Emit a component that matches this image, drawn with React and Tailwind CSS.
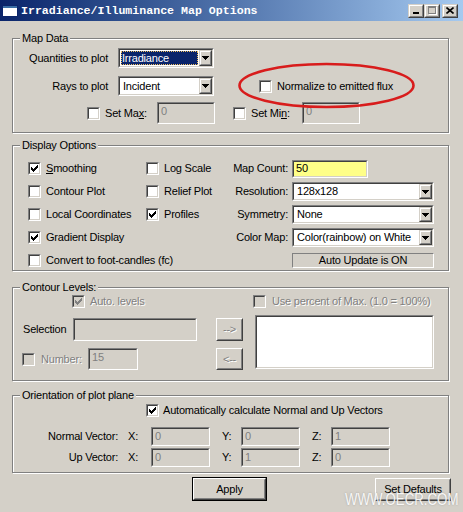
import React from "react";

// Classic 3D-style primitives
function Check({ checked = false, disabled = false }) {
  const inner = disabled
    ? "relative block w-full h-full border border-t-[#404040] border-l-[#404040] border-b-[#d4d0c8] border-r-[#d4d0c8] bg-[#d4d0c8]"
    : "relative block w-full h-full border border-t-[#404040] border-l-[#404040] border-b-[#d4d0c8] border-r-[#d4d0c8] bg-white";
  return (
    <span className="block w-[13px] h-[13px] shrink-0 border border-t-[#808080] border-l-[#808080] border-b-white border-r-white">
      <span className={inner}>
        {checked && (
          <svg className="absolute left-0 top-0" width="9" height="9" viewBox="0 0 9 9" shapeRendering="crispEdges">
            <path
              d="M7 1h1v1h-1z M6 2h2v1h-2z M1 3h1v1h-1z M5 3h3v1h-3z M1 4h2v1h-2z M4 4h3v1h-3z M1 5h5v1h-5z M2 6h3v1h-3z M3 7h1v1h-1z"
              fill={disabled ? "#808080" : "#000"}
            />
          </svg>
        )}
      </span>
    </span>
  );
}

function Sunken({ className = "", inner = "bg-white", children }) {
  return (
    <div className={"shrink-0 border border-t-[#808080] border-l-[#808080] border-b-white border-r-white " + className}>
      <div className={"h-full border border-t-[#404040] border-l-[#404040] border-b-[#d4d0c8] border-r-[#d4d0c8] " + inner}>
        {children}
      </div>
    </div>
  );
}

function Raised({ className = "", children }) {
  return (
    <div className={"shrink-0 border border-t-[#d4d0c8] border-l-[#d4d0c8] border-b-[#404040] border-r-[#404040] " + className}>
      <div className="h-full flex items-center justify-center border border-t-white border-l-white border-b-[#808080] border-r-[#808080] bg-[#d4d0c8]">
        {children}
      </div>
    </div>
  );
}

function DownArrow() {
  return (
    <svg width="7" height="4" viewBox="0 0 7 4" shapeRendering="crispEdges">
      <path d="M0 0h7v1h-7z M1 1h5v1h-5z M2 2h3v1h-3z M3 3h1v1h-1z" fill="#000" />
    </svg>
  );
}

function Combo({ className = "", value, focused = false }) {
  return (
    <Sunken className={className} inner="bg-white flex">
      <div className="flex-1 min-w-0 flex items-stretch">
        {focused ? (
          <div className="flex-1 m-[1px] flex items-center pl-[1px] bg-[#0a246a] text-white outline-1 outline-dotted outline-[#f0c060] -outline-offset-1">
            {value}
          </div>
        ) : (
          <div className="flex items-center pl-[3px]">{value}</div>
        )}
      </div>
      <Raised className="w-[13px]">
        <DownArrow />
      </Raised>
    </Sunken>
  );
}

function Btn({ className = "", children, isDefault = false, disabled = false }) {
  const label = disabled ? (
    <span className="text-[#808080] [text-shadow:1px_1px_0_#fff]">{children}</span>
  ) : (
    children
  );
  if (isDefault) {
    return (
      <div className={"shrink-0 border border-black " + className}>
        <div className="h-full flex items-center justify-center border border-t-white border-l-white border-b-[#404040] border-r-[#404040]">
          <div className="w-full h-full flex items-center justify-center border border-t-[#d4d0c8] border-l-[#d4d0c8] border-b-[#808080] border-r-[#808080]">
            {label}
          </div>
        </div>
      </div>
    );
  }
  return (
    <div className={"shrink-0 border border-t-white border-l-white border-b-[#404040] border-r-[#404040] " + className}>
      <div className="h-full flex items-center justify-center border border-t-[#d4d0c8] border-l-[#d4d0c8] border-b-[#808080] border-r-[#808080]">
        {label}
      </div>
    </div>
  );
}

function Dis({ className = "", children }) {
  return <span className={"text-[#808080] [text-shadow:1px_1px_0_#fff] " + className}>{children}</span>;
}

function Group({ title, className = "", children }) {
  return (
    <div className={"ml-[12px] w-[437px] flex flex-col border border-[#808080] shadow-[inset_1px_1px_0_#fff,1px_1px_0_#fff] " + className}>
      <div className="self-start -mt-[7px] -mb-[6px] ml-[7px] h-[13px] px-[2px] bg-[#d4d0c8] leading-[13px]">{title}</div>
      {children}
    </div>
  );
}

function CheckLabel({ checked, children, className = "" }) {
  return (
    <div className={"flex items-center gap-[5px] " + className}>
      <Check checked={checked} />
      <span>{children}</span>
    </div>
  );
}

function VecField({ value }) {
  return (
    <Sunken className="w-[59px] h-[19px]" inner="bg-[#d4d0c8] text-[#808080] pl-[2px] pt-[1px]">
      {value}
    </Sunken>
  );
}

function VecRow({ className = "", label, x, y, z }) {
  return (
    <div className={"h-[19px] flex items-center " + className}>
      <span className="w-[105px] text-right">{label}</span>
      <span className="ml-[10px] w-[23px]">X:</span>
      <VecField value={x} />
      <span className="ml-[12px] w-[19px]">Y:</span>
      <VecField value={y} />
      <span className="ml-[12px] w-[19px]">Z:</span>
      <VecField value={z} />
    </div>
  );
}

function TitleBar() {
  return (
    <div className="h-[21px] flex items-center bg-linear-to-r from-[#0a246a] to-[#a6caf0]">
      <svg className="ml-[2px] shrink-0" width="16" height="12" viewBox="0 0 16 12" shapeRendering="crispEdges">
        <rect x="0" y="0" width="16" height="12" fill="#0a246a" />
        <rect x="1" y="1" width="14" height="2" fill="#3a6ea5" />
        <rect x="1" y="3" width="14" height="8" fill="#ffffff" />
      </svg>
      <span className="ml-[3px] text-white font-bold text-[11.6px] tracking-normal font-['Liberation_Mono',monospace]">
        Irradiance/Illuminance Map Options
      </span>
      <div className="ml-auto mr-[5px] flex items-center">
        <Raised className="w-[16px] h-[14px]">
          <svg width="8" height="7" viewBox="0 0 8 7" shapeRendering="crispEdges">
            <rect x="1" y="5" width="6" height="2" fill="#000" />
          </svg>
        </Raised>
        <Raised className="w-[16px] h-[14px]">
          <svg width="10" height="9" viewBox="0 0 10 9" shapeRendering="crispEdges">
            <path d="M1 0h8v2h-8z M1 0h1v8h-1z M8 0h1v8h-1z M1 7h8v1h-8z" fill="#808080" />
            <path d="M2 8h8v1h-8z M9 1h1v8h-1z" fill="#ffffff" />
          </svg>
        </Raised>
        <Raised className="ml-[2px] w-[16px] h-[14px]">
          <svg width="8" height="7" viewBox="0 0 8 7">
            <path d="M0.5 0.5 L7.5 6.5 M7.5 0.5 L0.5 6.5" stroke="#000" strokeWidth="1.6" />
          </svg>
        </Raised>
      </div>
    </div>
  );
}

export default function App() {
  return (
    <div className="relative w-[463px] h-[512px] overflow-hidden bg-[#d4d0c8] text-black text-[11px] tracking-[-0.2px] leading-[13px] font-['Liberation_Sans',Arial,sans-serif]">
      <TitleBar />

      <Group title="Map Data" className="mt-[17px] h-[95px]">
        <div className="mt-[9px] h-[20px] flex items-center">
          <span className="w-[95px] text-right">Quantities to plot</span>
          <Combo className="ml-[10px] w-[96px] h-[20px]" value="Irradiance" focused />
        </div>
        <div className="mt-[8px] h-[20px] flex items-center">
          <span className="w-[95px] text-right">Rays to plot</span>
          <Combo className="ml-[10px] w-[96px] h-[20px]" value="Incident" />
          <CheckLabel className="ml-[45px]">Normalize to emitted flux</CheckLabel>
        </div>
        <div className="mt-[6px] h-[22px] flex items-center">
          <span className="ml-[74px]">
            <Check />
          </span>
          <span className="ml-[5px] w-[52px]">
            Set Ma<u>x</u>:
          </span>
          <Sunken className="w-[58px] h-[22px]" inner="bg-[#d4d0c8] text-[#808080] pl-[2px] pt-[1px]">
            0
          </Sunken>
          <span className="ml-[18px]">
            <Check />
          </span>
          <span className="ml-[5px] w-[51px]">
            Set Mi<u>n</u>:
          </span>
          <Sunken className="w-[58px] h-[22px]" inner="bg-[#d4d0c8] text-[#808080] pl-[2px] pt-[1px]">
            0
          </Sunken>
        </div>
      </Group>

      <Group title="Display Options" className="mt-[12px] h-[126px]">
        <div className="mt-[11px] flex flex-col">
          <div className="h-[23px] flex items-center">
            <CheckLabel checked className="ml-[15px] w-[118px]">
              <u>S</u>moothing
            </CheckLabel>
            <CheckLabel className="w-[84px]">Log Scale</CheckLabel>
            <span className="w-[58px] text-right">Map Count:</span>
            <Sunken className="ml-[4px] w-[76px] h-[18px]" inner="bg-[#ffff88] pl-[2px] flex items-center">
              50
            </Sunken>
          </div>
          <div className="h-[23px] flex items-center">
            <CheckLabel className="ml-[15px] w-[118px]">Contour Plot</CheckLabel>
            <CheckLabel className="w-[84px]">Relief Plot</CheckLabel>
            <span className="w-[58px] text-right">Resolution:</span>
            <Combo className="ml-[4px] w-[142px] h-[19px]" value="128x128" />
          </div>
          <div className="h-[23px] flex items-center">
            <CheckLabel className="ml-[15px] w-[118px]">Local Coordinates</CheckLabel>
            <CheckLabel checked className="w-[84px]">
              Profiles
            </CheckLabel>
            <span className="w-[58px] text-right">Symmetry:</span>
            <Combo className="ml-[4px] w-[142px] h-[19px]" value="None" />
          </div>
          <div className="h-[23px] flex items-center">
            <CheckLabel checked className="ml-[15px] w-[118px]">
              Gradient Display
            </CheckLabel>
            <div className="w-[84px]" />
            <span className="w-[58px] text-right">Color Map:</span>
            <Combo className="ml-[4px] w-[142px] h-[19px]" value="Color(rainbow) on White" />
          </div>
          <div className="h-[23px] flex items-center">
            <CheckLabel className="ml-[15px] w-[260px]">Convert to foot-candles (fc)</CheckLabel>
            <div className="ml-[4px] w-[142px] h-[15px] flex items-center justify-center border border-t-[#808080] border-l-[#808080] border-b-white border-r-white">
              Auto Update is ON
            </div>
          </div>
        </div>
      </Group>

      <Group title="Contour Levels:" className="mt-[16px] h-[94px]">
        <div className="mt-[7px] h-[13px] flex items-center">
          <div className="w-[240px] pl-[59px] flex items-center gap-[5px]">
            <Check checked disabled />
            <Dis>Auto. levels</Dis>
          </div>
          <div className="flex items-center gap-[6px]">
            <Check disabled />
            <Dis>Use percent of Max. (1.0 = 100%)</Dis>
          </div>
        </div>
        <div className="mt-[7px] flex items-start">
          <div className="w-[203px] flex flex-col">
            <div className="mt-[3px] h-[23px] flex items-center">
              <span className="ml-[10px] w-[50px]">Selection</span>
              <Sunken className="w-[124px] h-[23px]" inner="bg-[#d4d0c8]" />
            </div>
            <div className="mt-[7px] h-[22px] flex items-center">
              <span className="ml-[9px]">
                <Check disabled />
              </span>
              <Dis className="ml-[6px] w-[47px]">Number:</Dis>
              <Sunken className="w-[50px] h-[22px]" inner="bg-[#d4d0c8] text-[#808080] pl-[2px] pt-[1px]">
                15
              </Sunken>
            </div>
          </div>
          <div className="w-[27px] flex flex-col">
            <Btn className="mt-[3px] h-[23px]" disabled>
              --&gt;
            </Btn>
            <Btn className="mt-[7px] h-[22px]" disabled>
              &lt;--
            </Btn>
          </div>
          <Sunken className="ml-[12px] w-[179px] h-[54px]" inner="bg-white" />
        </div>
      </Group>

      <Group title="Orientation of plot plane" className="mt-[14px] h-[78px]">
        <div className="mt-[8px] h-[13px] flex items-center pl-[133px] gap-[4px]">
          <Check checked />
          <span>Automatically calculate Normal and Up Vectors</span>
        </div>
        <VecRow className="mt-[10px]" label="Normal Vector:" x="0" y="0" z="1" />
        <VecRow className="mt-[2px]" label="Up Vector:" x="0" y="1" z="0" />
      </Group>

      <div className="mt-[4px] flex items-start pl-[192px]">
        <Btn isDefault className="w-[75px] h-[24px]">
          Apply
        </Btn>
        <Btn className="ml-[108px] mt-[1px] w-[76px] h-[23px]">Set Defaults</Btn>
      </div>

      {/* red annotation ring around the normalize option */}
      <svg className="absolute left-[237px] top-[62px] pointer-events-none" width="179" height="47" viewBox="0 0 179 47">
        <ellipse cx="89.5" cy="23.5" rx="87" ry="21.5" fill="none" stroke="#d81c1c" strokeWidth="2.6" />
      </svg>

      {/* site watermark */}
      <div className="absolute left-[345px] top-[490px] origin-left scale-x-[0.78] text-[17px] tracking-normal leading-[20px] text-white/90 font-['Liberation_Sans',Arial,sans-serif] [text-shadow:0_0_2px_rgba(120,120,120,0.6)] whitespace-nowrap">
        WWW.OECR.COM
      </div>
    </div>
  );
}
